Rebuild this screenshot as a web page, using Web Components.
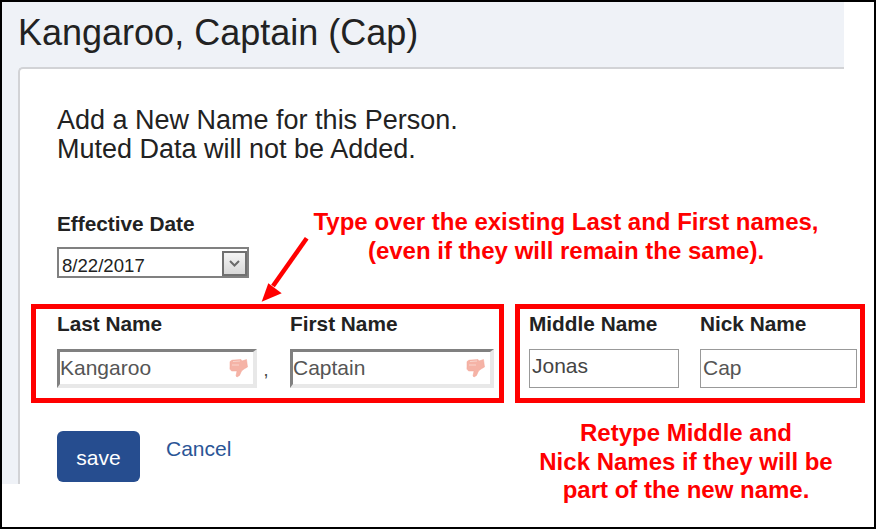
<!DOCTYPE html>
<html lang="en"><head><meta charset="utf-8"><title>Add name</title>
<style>
html,body{margin:0;padding:0;background:#fff}
body{font-family:"Liberation Sans",Arial,sans-serif;color:#222}
</style></head>
<body>
<app-frame>
  <person-panel heading="Kangaroo, Captain (Cap)">
    <p-intro>Add a New Name for this Person.<br>Muted Data will not be Added.</p-intro>
    <form-field label="Effective Date" class="date"><date-select value="8/22/2017"></date-select></form-field>
    <field-row>
      <field-group style="--w:473px;--gap:16.5px;--pl:21px">
        <form-field label="Last Name"><name-input value="Kangaroo" muted style="width:200px"></name-input></form-field>
        <sep-comma></sep-comma>
        <form-field label="First Name"><name-input value="Captain" muted style="width:204px"></name-input></form-field>
      </field-group>
      <field-group style="--w:350px;--gap:21px;--pl:9px">
        <form-field label="Middle Name"><name-input value="Jonas" style="width:150px;--ty:-3px;color:#444"></name-input></form-field>
        <form-field label="Nick Name"><name-input value="Cap" style="width:157px;--ty:-1px"></name-input></form-field>
      </field-group>
    </field-row>
    <form-actions></form-actions>
  </person-panel>
  <call-out style="left:272px;top:206px;width:584px">Type over the existing Last and First names,<br>(even if they will remain the same).</call-out>
  <call-out style="left:494px;top:417px;width:380px">Retype Middle and<br>Nick Names if they will be<br>part of the new name.</call-out>
  <red-arrow></red-arrow>
</app-frame>
<script>
const def=(name,html)=>customElements.define(name,class extends HTMLElement{
  connectedCallback(){
    if(this.shadowRoot)return;
    const r=this.attachShadow({mode:'open'});
    r.innerHTML=typeof html==='function'?html(this):html;
  }
});
def('app-frame',`<style>:host{display:block;position:relative;box-sizing:border-box;width:876px;height:529px;border:2px solid #000;background:#fff;overflow:hidden}</style><slot></slot>`);
def('person-panel',e=>`<style>
:host{display:block;box-sizing:border-box;width:842px;height:482px;background:#eff2f7;padding-left:16px}
h1{margin:0;height:65px;box-sizing:border-box;padding-top:11px;font:400 36px/40px "Liberation Sans",Arial,sans-serif;color:#222}
.card{box-sizing:border-box;height:417px;border:2px solid #d2d3d6;border-width:2px 0 0 2px;border-top-left-radius:5px;background:#fff;padding:37px 0 0 37px}
</style><h1>${e.getAttribute('heading')}</h1><div class="card"><slot></slot></div>`);
def('p-intro',`<style>:host{display:block;font-size:27px;line-height:29px;color:#222;margin-bottom:49px}</style><slot></slot>`);
def('form-field',e=>`<style>
:host{display:block;flex:none}
:host(.date){margin-bottom:26px}
.l{font-weight:700;font-size:20.8px;line-height:22px;height:22px;color:#222;margin-bottom:14px;white-space:nowrap}
:host(.date) .l{margin-bottom:12px}
</style><div class="l">${e.getAttribute('label')}</div><slot></slot>`);
def('date-select',e=>`<style>
:host{display:flex;box-sizing:border-box;width:192px;height:31px;border:2px solid #808080;background:#fff;padding:1px 0 0 3px;font-size:18.6px;color:#222;justify-content:space-between}
span{line-height:32px;height:28px}
.b{box-sizing:border-box;width:25px;height:25px;margin:1px 0 0;border:2px solid #707070;background:linear-gradient(#f4f4f4,#d8d8d8);display:flex;align-items:center;justify-content:center}
</style><span>${e.getAttribute('value')}</span><div class="b"><svg width="13" height="9" viewBox="0 0 13 9"><path d="M2 2l4.5 4.5L11 2" fill="none" stroke="#6a6a6a" stroke-width="2"/></svg></div>`);
def('name-input',e=>{const m=e.hasAttribute('muted');return `<style>
:host{display:flex;box-sizing:border-box;height:39px;background:#fff;align-items:center;justify-content:space-between;font-size:21px;color:#555;
${m?'border-style:solid;border-width:3px 4px 4px 3px;border-color:#808080 #e8e8e8 #e8e8e8 #808080;padding:0 5px 0 0':'border:1px solid #999;padding:0 0 0 2px'}}
span{position:relative;top:var(--ty,0)}
svg{display:block;margin-top:-1px}
</style><span>${e.getAttribute('value')}</span>${m?`<svg width="19" height="20" viewBox="0 0 19 20"><path d="M1 4C1.5 2.5 3 2 5 2L12 1.5 13 3 17.5 1.5 18.5 9 15 11 12.5 13 10.5 17.5 8 19 7 18 8 13 3 13C1.5 12.5.5 11 1 9z" fill="#f5b3a6" stroke="#f2a596" stroke-width=".5"/><path d="M4 3.5L11 3M3 7h7" stroke="#f9d5cd" stroke-width="1"/></svg>`:''}`});
def('sep-comma',`<style>:host{display:block;width:0;position:relative;font-size:18px;color:#444}span{position:absolute;left:-10px;top:47px;line-height:20px}</style><span>,</span>`);
def('field-row',`<style>:host{display:flex;gap:11px;margin-left:-26px}</style><slot></slot>`);
def('field-group',`<style>:host{display:flex;flex:none;box-sizing:border-box;width:var(--w);height:99px;border:5px solid #f00;padding:4px 0 0 var(--pl);gap:var(--gap)}</style><slot></slot>`);
def('form-actions',`<style>
:host{display:flex;align-items:flex-start;gap:26px;margin-top:28px}
button{box-sizing:border-box;width:83px;height:51px;border:0;border-radius:6px;background:#264d8f;color:#fff;font:400 21px "Liberation Sans",Arial,sans-serif;padding:3px 0 0}
a{font-size:21px;line-height:24px;color:#2a5596;text-decoration:none;margin-top:6px}
</style><button type="button">save</button><a href="#">Cancel</a>`);
def('call-out',`<style>:host{display:block;position:absolute;text-align:center;font-weight:700;font-size:24px;line-height:28.6px;color:#f00;white-space:nowrap}</style><slot></slot>`);
def('red-arrow',`<style>:host{display:block;position:absolute;left:250px;top:230px;width:70px;height:80px}svg{display:block}</style><svg width="70" height="80" viewBox="0 0 70 80"><path d="M54.7 6.3L21 54" stroke="#f00" stroke-width="4.5" fill="none"/><path d="M9.7 69.7L16.3 51.3 29.7 61.3z" fill="#f00"/></svg>`);
</script>
</body></html>
